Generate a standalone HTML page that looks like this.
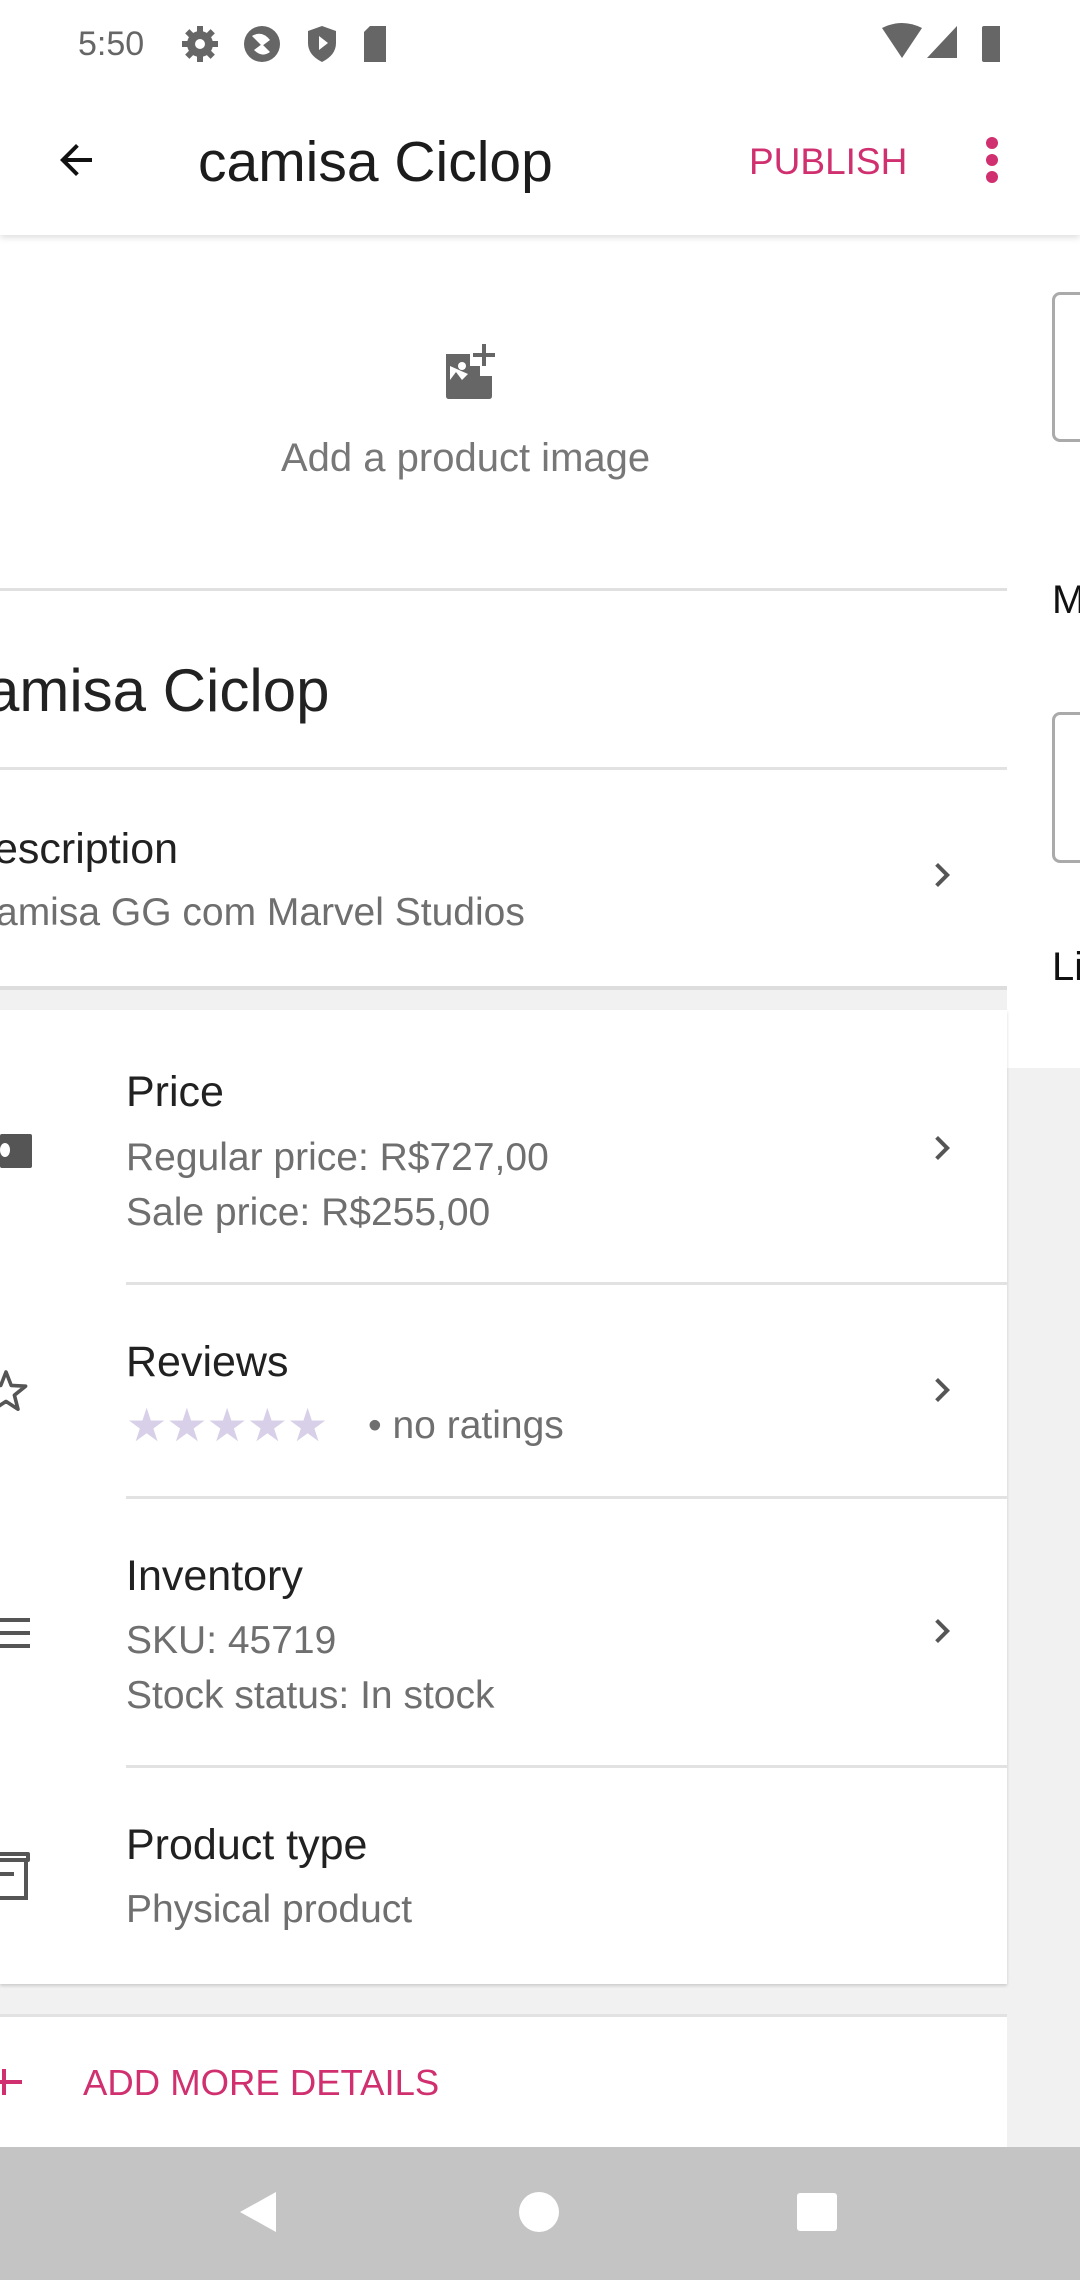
<!DOCTYPE html>
<html><head><meta charset="utf-8"><style>
*{margin:0;padding:0;box-sizing:border-box}
body{width:1080px;height:2280px;overflow:hidden;background:#f1f1f1;font-family:"Liberation Sans",sans-serif;position:relative}
.a{position:absolute}
.t{position:absolute;white-space:nowrap;line-height:1}
.h{font-size:43px;color:#212121}
.s{font-size:39px;color:#6f6f6f}
.div{position:absolute;height:3px;background:#e2e2e2}
</style></head><body>
<div class="a" style="left:0;top:0;width:1080px;height:235px;background:#fff;box-shadow:0 3px 6px rgba(0,0,0,.12);z-index:2">
<div class="t" style="left:78px;top:27px;font-size:34px;color:#666">5:50</div>
<svg class="a" style="left:180px;top:20px" width="240" height="48" viewBox="0 0 240 48">
<g fill="#666"><circle cx="20" cy="24" r="13"/><rect x="17" y="6" width="6" height="36"/><rect x="2" y="21" width="36" height="6"/><rect x="17" y="6" width="6" height="36" transform="rotate(45 20 24)"/><rect x="17" y="6" width="6" height="36" transform="rotate(-45 20 24)"/></g><circle cx="20" cy="24" r="5" fill="#fff"/>
<circle cx="82" cy="24" r="18" fill="#666"/><path d="M72 16 q10 -6 18 4 l-8 6z M90 32 q-8 6 -16 -2 l8 -6z" fill="#fff"/>
<path d="M142 6 l14 5 v12 q0 12 -14 19 q-14 -7 -14 -19 v-12z" fill="#666"/><path d="M139 16 l9 7 -9 7z" fill="#fff"/>
<path d="M190 6 h16 v36 h-22 v-30z" fill="#666"/>
</svg>
<svg class="a" style="left:880px;top:22px" width="120" height="44" viewBox="0 0 120 44">
<path d="M2 6 q20 -10 40 0 l-20 30z" fill="#666"/><path d="M47 36 l30 -32 v32z" fill="#666"/>
<rect x="102" y="4" width="20" height="36" rx="2" fill="#666"/>
</svg>
<svg class="a" style="left:52px;top:136px" width="48" height="48" viewBox="0 0 24 24"><path d="M20 11H7.8l5.6-5.6L12 4l-8 8 8 8 1.4-1.4L7.8 13H20z" fill="#111"/></svg>
<div class="t" style="left:198px;top:134px;font-size:57px;color:#1c1c1c">camisa Ciclop</div>
<div class="t" style="left:749px;top:143px;font-size:37px;color:#d0306f">PUBLISH</div>
<svg class="a" style="left:980px;top:136px" width="24" height="50"><circle cx="12" cy="7" r="6" fill="#d0306f"/><circle cx="12" cy="24" r="6" fill="#d0306f"/><circle cx="12" cy="41" r="6" fill="#d0306f"/></svg>
</div>
<div class="a" style="left:1007px;top:235px;width:73px;height:833px;background:#fff"></div>
<div class="a" style="left:1052px;top:292px;width:60px;height:150px;border:3px solid #aaa;border-radius:8px"></div>
<div class="t" style="left:1052px;top:580px;font-size:40px;color:#111">M</div>
<div class="a" style="left:1052px;top:712px;width:60px;height:151px;border:3px solid #aaa;border-radius:8px"></div>
<div class="t" style="left:1052px;top:947px;font-size:40px;color:#111">Li</div>
<div class="a" style="left:0;top:235px;width:1007px;height:353px;background:#fff"></div>
<svg class="a" style="left:444px;top:344px" width="52" height="56" viewBox="0 0 52 56"><path d="M2 10 h24 v12 h10 v10 h12 v20 q0 3 -3 3 h-40 q-3 0 -3 -3z" fill="#666"/><rect x="38" y="0" width="4" height="22" fill="#666"/><rect x="29" y="9" width="22" height="4" fill="#666"/><path d="M6 22 v14 l6 -8 6 8 6 -6z" fill="#fff"/><circle cx="18" cy="22" r="4" fill="#fff"/></svg>
<div class="t" style="left:281px;top:438px;font-size:40px;color:#777">Add a product image</div>
<div class="a" style="left:0;top:588px;width:1007px;height:400px;background:#fff;border-top:3px solid #e0e0e0"></div>
<div class="t" style="left:-14px;top:661px;font-size:60px;color:#222">amisa Ciclop</div>
<div class="div" style="left:0;top:767px;width:1007px"></div>
<div class="t h" style="left:-6px;top:828px">escription</div>
<div class="t s" style="left:-4px;top:893px">amisa GG com Marvel Studios</div>
<svg class="a" style="left:918px;top:851px" width="48" height="48" viewBox="0 0 24 24"><path d="M8.6 16.6 13.2 12 8.6 7.4 10 6l6 6-6 6z" fill="#555"/></svg>
<div class="a" style="left:0;top:986px;width:1007px;height:4px;background:#ddd"></div>
<div class="a" style="left:0;top:1010px;width:1007px;height:974px;background:#fff;box-shadow:0 2px 3px rgba(0,0,0,.15)"></div>
<div class="a" style="left:0;top:1134px;width:32px;height:34px;background:#555;border-radius:2px"></div><div class="a" style="left:0;top:1143px;width:10px;height:14px;background:#fff;border-radius:50%"></div>
<div class="t h" style="left:126px;top:1071px">Price</div>
<div class="t s" style="left:126px;top:1138px">Regular price: R$727,00</div>
<div class="t s" style="left:126px;top:1193px">Sale price: R$255,00</div>
<svg class="a" style="left:918px;top:1124px" width="48" height="48" viewBox="0 0 24 24"><path d="M8.6 16.6 13.2 12 8.6 7.4 10 6l6 6-6 6z" fill="#555"/></svg>
<div class="div" style="left:126px;top:1282px;width:881px"></div>
<svg class="a" style="left:-18px;top:1367px" width="48" height="48" viewBox="0 0 24 24"><path d="M12 2.5 14.6 9.2 21.8 9.6 16.2 14.1 18 21.1 12 17.2 6 21.1 7.8 14.1 2.2 9.6 9.4 9.2z" fill="none" stroke="#555" stroke-width="1.8" stroke-linejoin="round"/></svg>
<div class="t h" style="left:126px;top:1341px">Reviews</div>
<div class="t" style="left:126px;top:1402px;font-size:46px;color:#d8d0e8;letter-spacing:-1px">★★★★★</div>
<div class="t s" style="left:368px;top:1406px">• no ratings</div>
<svg class="a" style="left:918px;top:1366px" width="48" height="48" viewBox="0 0 24 24"><path d="M8.6 16.6 13.2 12 8.6 7.4 10 6l6 6-6 6z" fill="#555"/></svg>
<div class="div" style="left:126px;top:1496px;width:881px"></div>
<div class="a" style="left:0;top:1618px;width:30px;height:4px;background:#555"></div>
<div class="a" style="left:0;top:1631px;width:30px;height:4px;background:#555"></div>
<div class="a" style="left:0;top:1644px;width:30px;height:4px;background:#555"></div>
<div class="t h" style="left:126px;top:1555px">Inventory</div>
<div class="t s" style="left:126px;top:1621px">SKU: 45719</div>
<div class="t s" style="left:126px;top:1676px">Stock status: In stock</div>
<svg class="a" style="left:918px;top:1607px" width="48" height="48" viewBox="0 0 24 24"><path d="M8.6 16.6 13.2 12 8.6 7.4 10 6l6 6-6 6z" fill="#555"/></svg>
<div class="div" style="left:126px;top:1765px;width:881px"></div>
<div class="a" style="left:-4px;top:1852px;width:34px;height:10px;border:4px solid #555;border-radius:2px"></div>
<div class="a" style="left:-4px;top:1862px;width:32px;height:38px;border:4px solid #555;border-top:none"></div>
<div class="a" style="left:0;top:1872px;width:14px;height:4px;background:#555"></div>
<div class="t h" style="left:126px;top:1824px">Product type</div>
<div class="t s" style="left:126px;top:1890px">Physical product</div>
<div class="a" style="left:0;top:2014px;width:1007px;height:133px;background:#fff;border-top:3px solid #e2e2e2"></div>
<div class="a" style="left:0;top:2080px;width:22px;height:4px;background:#d0306f"></div>
<div class="a" style="left:2px;top:2069px;width:4px;height:26px;background:#d0306f"></div>
<div class="t" style="left:83px;top:2065px;font-size:36.5px;color:#d0306f">ADD MORE DETAILS</div>
<div class="a" style="left:0;top:2147px;width:1080px;height:133px;background:#c4c4c4"></div>
<svg class="a" style="left:236px;top:2190px" width="44" height="44"><path d="M40 2 L4 22 L40 42z" fill="#fff"/></svg>
<div class="a" style="left:519px;top:2192px;width:40px;height:40px;border-radius:50%;background:#fff"></div>
<div class="a" style="left:797px;top:2193px;width:40px;height:38px;border-radius:3px;background:#fff"></div>
</body></html>
